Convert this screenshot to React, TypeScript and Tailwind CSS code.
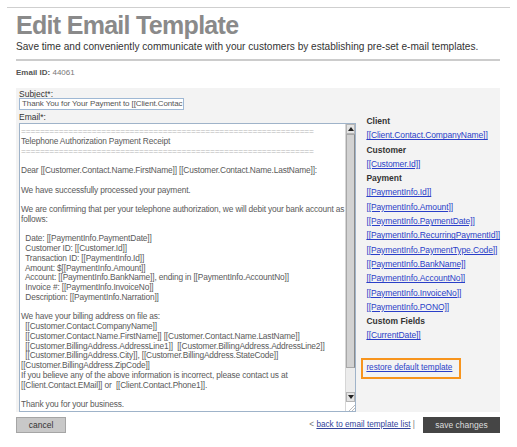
import React from 'react';

const eq = '='.repeat(62);

const bodyLines: string[] = [
  eq,
  'Telephone Authorization Payment Receipt',
  eq,
  '',
  'Dear [[Customer.Contact.Name.FirstName]] [[Customer.Contact.Name.LastName]]:',
  '',
  'We have successfully processed your payment.',
  '',
  'We are confirming that per your telephone authorization, we will debit your bank account as',
  'follows:',
  '',
  '  Date: [[PaymentInfo.PaymentDate]]',
  '  Customer ID: [[Customer.Id]]',
  '  Transaction ID: [[PaymentInfo.Id]]',
  '  Amount: $[[PaymentInfo.Amount]]',
  '  Account: [[PaymentInfo.BankName]], ending in [[PaymentInfo.AccountNo]]',
  '  Invoice #: [[PaymentInfo.InvoiceNo]]',
  '  Description: [[PaymentInfo.Narration]]',
  '',
  'We have your billing address on file as:',
  '  [[Customer.Contact.CompanyName]]',
  '  [[Customer.Contact.Name.FirstName]] [[Customer.Contact.Name.LastName]]',
  '  [[Customer.BillingAddress.AddressLine1]]  [[Customer.BillingAddress.AddressLine2]]',
  '  [[Customer.BillingAddress.City]], [[Customer.BillingAddress.StateCode]]',
  '[[Customer.BillingAddress.ZipCode]]',
  'If you believe any of the above information is incorrect, please contact us at',
  '[[Client.Contact.EMail]] or  [[Client.Contact.Phone1]].',
  '',
  'Thank you for your business.',
];

type Field = { heading?: string; link?: string };

const fields: Field[] = [
  { heading: 'Client' },
  { link: '[[Client.Contact.CompanyName]]' },
  { heading: 'Customer' },
  { link: '[[Customer.Id]]' },
  { heading: 'Payment' },
  { link: '[[PaymentInfo.Id]]' },
  { link: '[[PaymentInfo.Amount]]' },
  { link: '[[PaymentInfo.PaymentDate]]' },
  { link: '[[PaymentInfo.RecurringPaymentId]]' },
  { link: '[[PaymentInfo.PaymentType.Code]]' },
  { link: '[[PaymentInfo.BankName]]' },
  { link: '[[PaymentInfo.AccountNo]]' },
  { link: '[[PaymentInfo.InvoiceNo]]' },
  { link: '[[PaymentInfo.PONO]]' },
  { heading: 'Custom Fields' },
  { link: '[[CurrentDate]]' },
];

const Scrollbar: React.FC = () => (
  <div className="flex flex-col w-[10px] bg-[#ececec] border-l border-[#d6d6d6]">
    <div className="h-[10px] flex items-center justify-center bg-[#e4e4e4] border border-[#b5b5b5]">
      <svg width="6" height="4" viewBox="0 0 6 4">
        <path d="M0 4 L3 0 L6 4 Z" fill="#222" />
      </svg>
    </div>
    <div className="h-[234px] bg-[#d2d2d2] border border-[#a8a8a8] border-r-[#8a8a8a]" />
    <div className="flex-1" />
    <div className="h-[10px] flex items-center justify-center bg-[#e4e4e4] border border-[#b5b5b5]">
      <svg width="6" height="4" viewBox="0 0 6 4">
        <path d="M0 0 L6 0 L3 4 Z" fill="#222" />
      </svg>
    </div>
    <div className="h-[9px] bg-white flex items-end justify-end">
      <svg width="7" height="7" viewBox="0 0 7 7">
        <path d="M1 7 L7 1 M4 7 L7 4" stroke="#aaa" strokeWidth="0.8" />
      </svg>
    </div>
  </div>
);

export default function App() {
  return (
    <div className="w-[517px] h-[447px] bg-white overflow-hidden font-['Liberation_Sans',Arial,sans-serif]">
      <div className="mx-[7px] pt-[7px]">
        <div className="border-t border-[#cfcfcf]" />
      </div>
      <div className="pl-[16px] pr-[17px]">
        <h1 className="mt-[3px] text-[25px] leading-[28px] font-bold text-[#8a8a8a] tracking-[-0.7px]">
          Edit Email Template
        </h1>
        <p className="mt-[2px] text-[10.1px] leading-[12px] text-[#333]">
          Save time and conveniently communicate with your customers by establishing pre-set e-mail templates.
        </p>
        <div className="mt-[6px] h-[2px] bg-[#cccccc]" />
        <p className="mt-[6px] text-[8px] leading-[12px]">
          <span className="font-bold text-[#555]">Email ID:</span> <span className="text-[#777]">44061</span>
        </p>

        <div className="mt-[9px] h-[324px] bg-[#f3f3f3] flex">
          <div className="pl-[3px] w-[342px] flex flex-col">
            <label className="mt-[1px] text-[8.5px] leading-[10px] text-[#333]">Subject*:</label>
            <div className="mt-[-1px] w-[165px] h-[12px] bg-white border border-[#9fb8d4] overflow-hidden">
              <div className="px-[2px] text-[8px] leading-[10px] text-[#555] whitespace-nowrap tracking-[-0.1px]">
                Thank You for Your Payment to [[Client.Contac
              </div>
            </div>
            <label className="mt-[2px] text-[8.5px] leading-[10px] text-[#333]">Email*:</label>
            <div className="mt-[1px] flex-1 bg-white border border-[#9fb3c9] flex overflow-hidden">
              <div className="flex-1 pt-[3px] pl-[1px] overflow-hidden">
                {bodyLines.map((line, i) => (
                  <div
                    key={i}
                    className="h-[9.75px] text-[8.35px] leading-[9.75px] text-[#5a5a5a] whitespace-pre tracking-[-0.15px]"
                  >
                    {line === eq ? <span className="text-[#b4b4b4]">{line}</span> : line}
                  </div>
                ))}
              </div>
              <Scrollbar />
            </div>
          </div>

          <div className="pl-[10px] pt-[26px] flex flex-col">
            {fields.map((f, i) => (
              <div key={i} className="h-[14.3px] text-[8.5px] leading-[14px] whitespace-nowrap">
                {f.heading ? (
                  <span className="font-bold text-[#333]">{f.heading}</span>
                ) : (
                  <a href="#" className="text-[#2a3fc8] underline tracking-[-0.1px]">
                    {f.link}
                  </a>
                )}
              </div>
            ))}
            <div className="mt-[15px] -ml-[5px] w-[100px] h-[21px] border-2 border-[#f7941d] flex items-center pl-[3px]">
              <a href="#" className="text-[8.2px] leading-[10px] text-[#2a3fc8] underline whitespace-nowrap">
                restore default template
              </a>
            </div>
          </div>
        </div>

        <div className="mt-[5px] flex items-center">
          <button className="w-[50px] h-[16px] bg-[#c8c8c8] border border-[#a5a5a5] text-[8.5px] text-[#333] leading-[14px]">
            cancel
          </button>
          <div className="ml-auto mr-[8px] text-[8.2px] text-[#777] whitespace-nowrap">
            &lt; <a href="#" className="text-[#33449a] underline">back to email template list</a> |
          </div>
          <button className="w-[77px] h-[16px] bg-[#454545] text-[8.5px] text-[#dddddd] leading-[16px]">
            save changes
          </button>
        </div>
      </div>
    </div>
  );
}
